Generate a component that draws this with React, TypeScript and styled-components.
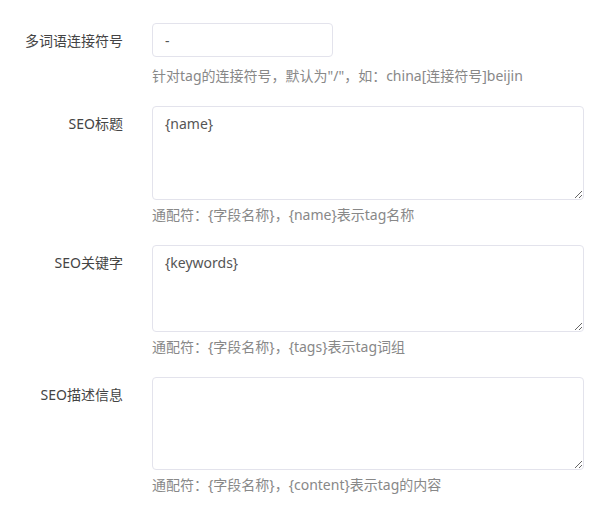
import React, { useState } from "react";
import styled, { createGlobalStyle } from "styled-components";

const GlobalStyle = createGlobalStyle`
  body {
    margin: 0;
    background: #fff;
    font-family: "Noto Sans", "Noto Sans CJK SC", sans-serif;
  }
`;

type Field = {
  key: string;
  label: string;
  value: string;
  help: string;
  multiline: boolean;
  rows?: number;
};

const fields: Field[] = [
  {
    key: "sep",
    label: "多词语连接符号",
    value: "-",
    help: "针对tag的连接符号，默认为\"/\"，如：china[连接符号]beijin",
    multiline: false,
  },
  {
    key: "title",
    label: "SEO标题",
    value: "{name}",
    help: "通配符：{字段名称}，{name}表示tag名称",
    multiline: true,
    rows: 94,
  },
  {
    key: "keywords",
    label: "SEO关键字",
    value: "{keywords}",
    help: "通配符：{字段名称}，{tags}表示tag词组",
    multiline: true,
    rows: 87,
  },
  {
    key: "desc",
    label: "SEO描述信息",
    value: "",
    help: "通配符：{字段名称}，{content}表示tag的内容",
    multiline: true,
    rows: 93,
  },
];

const App: React.FC = () => {
  const [values, setValues] = useState<Record<string, string>>(
    Object.fromEntries(fields.map((f) => [f.key, f.value]))
  );

  const handleChange = (key: string, value: string) => {
    setValues((prev) => ({ ...prev, [key]: value }));
  };

  return (
    <>
      <GlobalStyle />
      <Form>
        {fields.map((f) => (
          <Row key={f.key}>
            <Label htmlFor={f.key}>{f.label}</Label>
            <Control>
              {f.multiline ? (
                <TextArea
                  id={f.key}
                  $height={f.rows || 94}
                  value={values[f.key]}
                  onChange={(e) => handleChange(f.key, e.target.value)}
                />
              ) : (
                <Input
                  id={f.key}
                  type="text"
                  value={values[f.key]}
                  onChange={(e) => handleChange(f.key, e.target.value)}
                />
              )}
              <Help $wide={!f.multiline}>{f.help}</Help>
            </Control>
          </Row>
        ))}
      </Form>
    </>
  );
};

const Form = styled.form`
  display: flex;
  flex-direction: column;
  gap: 20px;
  padding-top: 23px;
`;

const Row = styled.div`
  display: grid;
  grid-template-columns: 123px 432px;
  column-gap: 29px;
  align-items: start;
`;

const Label = styled.label`
  padding-top: 1px;
  text-align: right;
  font-size: 14px;
  line-height: 34px;
  color: #444;
`;

const Control = styled.div`
  display: flex;
  flex-direction: column;
`;

const Input = styled.input`
  box-sizing: border-box;
  width: 181px;
  height: 34px;
  padding: 0 12px;
  border: 1px solid #e3e3ec;
  border-radius: 4px;
  font-family: inherit;
  font-size: 14px;
  color: #555;
  background: #fff;

  &:focus {
    outline: none;
  }
`;

const TextArea = styled.textarea<{ $height: number }>`
  box-sizing: border-box;
  width: 100%;
  height: ${(p) => p.$height}px;
  padding: 7px 12px;
  border: 1px solid #e3e3ec;
  border-radius: 4px;
  font-family: inherit;
  font-size: 14px;
  line-height: 20px;
  color: #555;
  background: #fff;
  resize: vertical;

  &:focus {
    outline: none;
  }
`;

const Help = styled.div<{ $wide: boolean }>`
  margin-top: ${(p) => (p.$wide ? "9px" : "5px")};
  font-size: 14px;
  line-height: 20px;
  color: #888;
  white-space: nowrap;
`;

export default App;
